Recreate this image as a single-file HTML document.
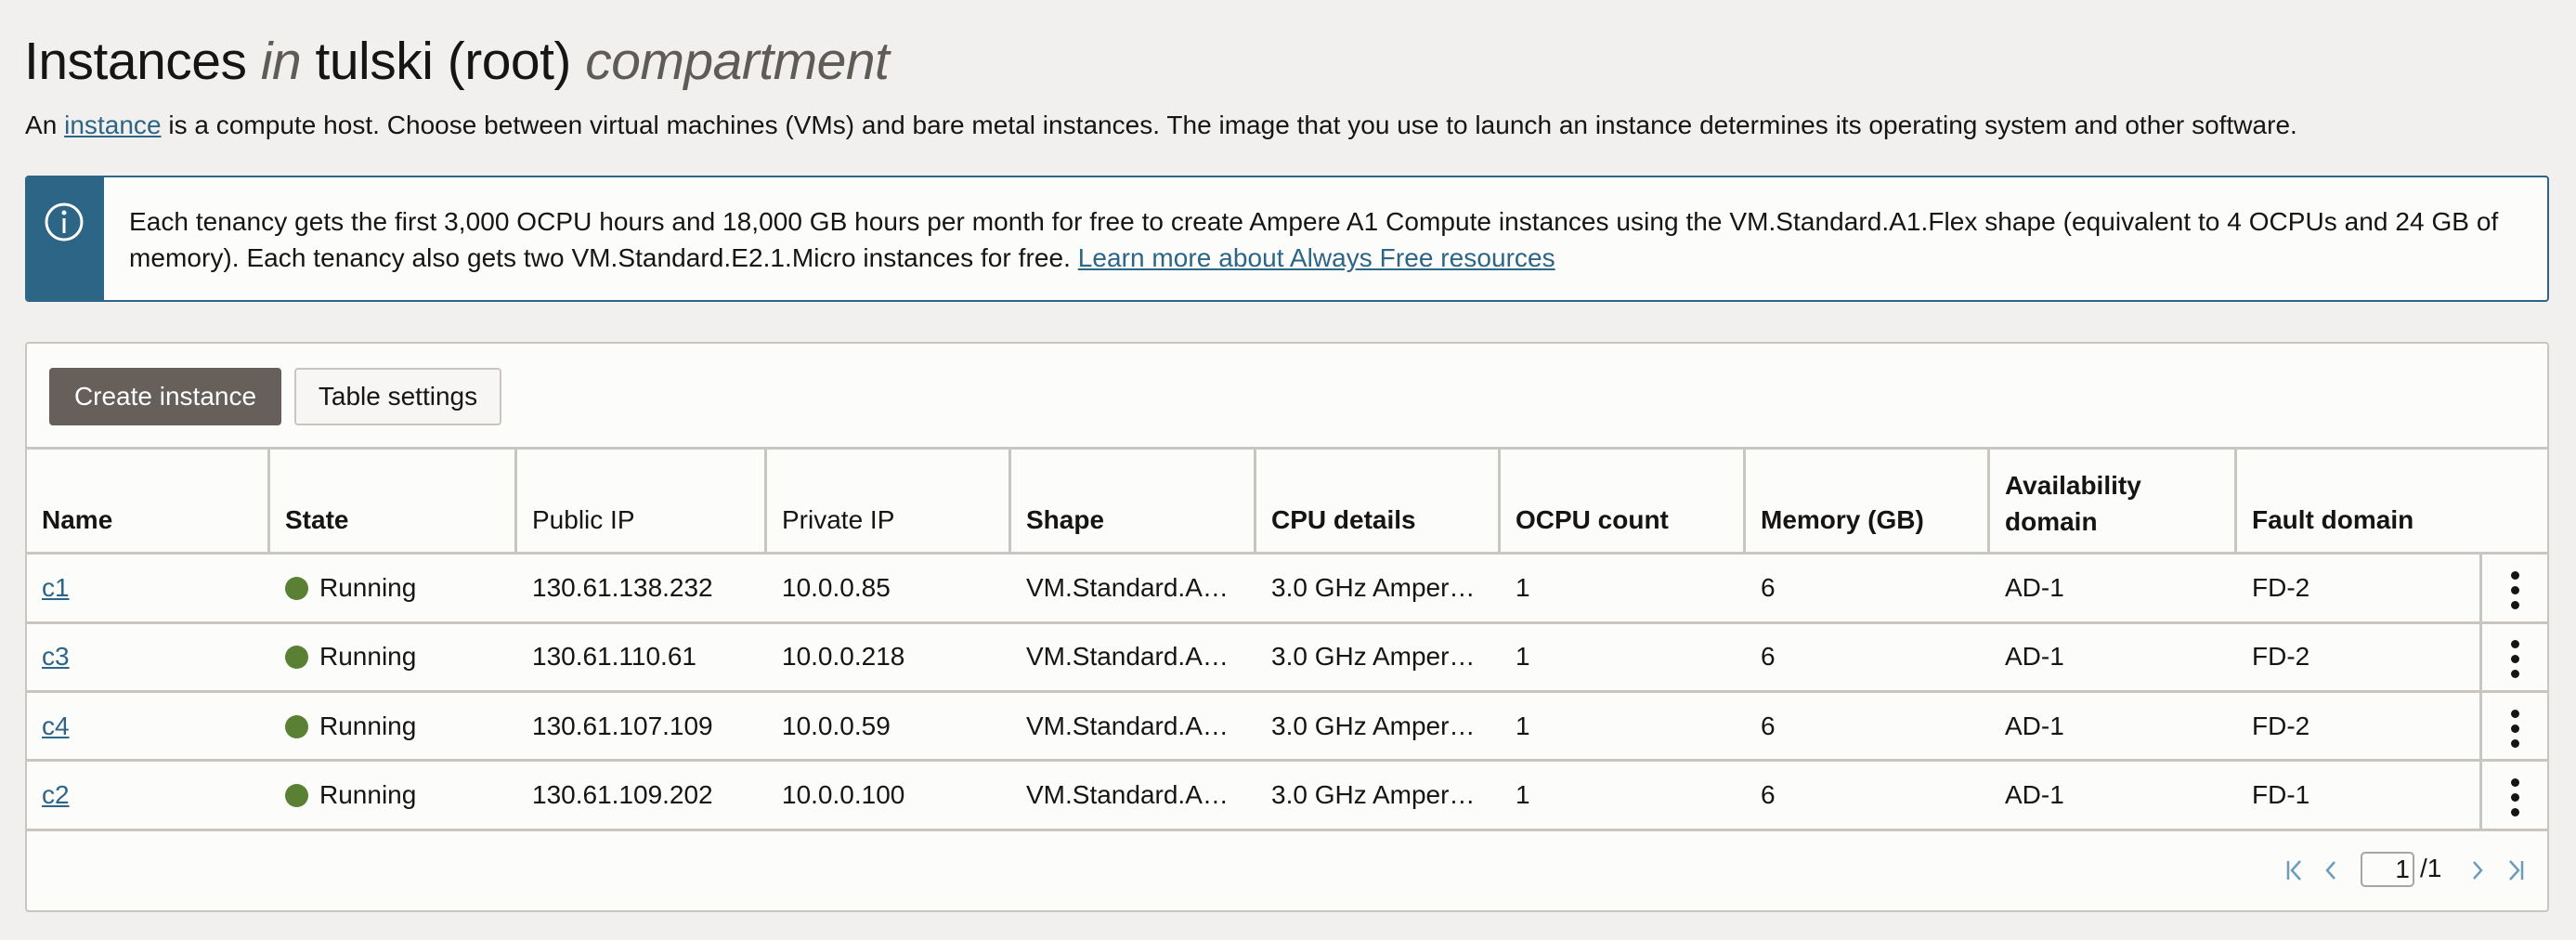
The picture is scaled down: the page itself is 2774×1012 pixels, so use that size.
<!DOCTYPE html>
<html><head><meta charset="utf-8"><style>
*{box-sizing:border-box;margin:0;padding:0}
body{width:2774px;height:1012px;overflow:hidden;background:#f1f0ee;font-family:"Liberation Sans",sans-serif;color:#161513;position:relative}
.abs{position:absolute;white-space:nowrap}
a{color:#2c6585;text-decoration:underline}
h1{position:absolute;left:26px;top:33px;font-size:57px;font-weight:400;letter-spacing:-0.5px}
h1 i{color:#5f5b57}
.sub{left:27px;top:119px;font-size:28px;letter-spacing:0.02px}
.info{position:absolute;left:27px;top:189px;width:2718px;height:136px;background:#fcfcfb;border:2px solid #2c6585;border-radius:4px;overflow:hidden}
.strip{position:absolute;left:0;top:0;width:83px;height:100%;background:#2c6585}
.itext{position:absolute;left:110px;top:28px;font-size:28px;line-height:39px;width:2590px;letter-spacing:0.05px}
.panel{position:absolute;left:27px;top:368px;width:2718px;height:614px;background:#fcfcfb;border:2px solid #c9c6c1;border-radius:4px}
.btn{position:absolute;top:26px;height:62px;font-size:28px;line-height:58px;text-align:center;border-radius:4px}
.b1{left:24px;width:250px;background:#665f5a;color:#fff;border:2px solid #665f5a}
.b2{left:288px;width:223px;background:#f7f6f5;border:2px solid #c9c6c1}
.hl{position:absolute;left:0;width:100%;height:3px;background:#c9c6c1}
.vl{position:absolute;width:3px;background:#c9c6c1}
.c{position:absolute;font-size:28px;white-space:nowrap}
.h{font-weight:700}
.dot{display:inline-block;width:25px;height:25px;border-radius:50%;background:#5a8033;vertical-align:-4px;margin-right:12px}
.keb{position:absolute;width:9px;height:9px;border-radius:50%;background:#161513}
</style></head><body>
<h1>Instances <i>in</i> tulski (root) <i>compartment</i></h1>
<div class="abs sub">An <a>instance</a> is a compute host. Choose between virtual machines (VMs) and bare metal instances. The image that you use to launch an instance determines its operating system and other software.</div>
<div class="info"><div class="strip">
<svg width="83" height="132" viewBox="0 0 83 132"><circle cx="40" cy="48" r="19" fill="none" stroke="#fff" stroke-width="3"/><circle cx="40" cy="38" r="2.5" fill="#fff"/><rect x="38.5" y="44" width="3" height="16" fill="#fff"/></svg></div>
<div class="itext">Each tenancy gets the first 3,000 OCPU hours and 18,000 GB hours per month for free to create Ampere A1 Compute instances using the VM.Standard.A1.Flex shape (equivalent to 4 OCPUs and 24 GB of memory). Each tenancy also gets two VM.Standard.E2.1.Micro instances for free. <a>Learn more about Always Free resources</a></div></div>
<div class="panel">
<div class="btn b1">Create instance</div><div class="btn b2">Table settings</div>
<div class="hl" style="top:111px"></div>
<div class="hl" style="top:224px"></div>
<div class="hl" style="top:299px"></div>
<div class="hl" style="top:373px"></div>
<div class="hl" style="top:447px"></div>
<div class="hl" style="top:522px"></div>
<div class="vl" style="left:259px;top:112px;height:113px"></div>
<div class="vl" style="left:525px;top:112px;height:113px"></div>
<div class="vl" style="left:794px;top:112px;height:113px"></div>
<div class="vl" style="left:1057px;top:112px;height:113px"></div>
<div class="vl" style="left:1321px;top:112px;height:113px"></div>
<div class="vl" style="left:1584px;top:112px;height:113px"></div>
<div class="vl" style="left:1848px;top:112px;height:113px"></div>
<div class="vl" style="left:2111px;top:112px;height:113px"></div>
<div class="vl" style="left:2377px;top:112px;height:113px"></div>
<div class="vl" style="left:2641px;top:225px;height:298px"></div>
<div class="c h" style="left:16px;top:174px">Name</div>
<div class="c h" style="left:278px;top:174px">State</div>
<div class="c" style="left:544px;top:174px">Public IP</div>
<div class="c" style="left:813px;top:174px">Private IP</div>
<div class="c h" style="left:1076px;top:174px">Shape</div>
<div class="c h" style="left:1340px;top:174px">CPU details</div>
<div class="c h" style="left:1603px;top:174px">OCPU count</div>
<div class="c h" style="left:1867px;top:174px">Memory (GB)</div>
<div class="c h" style="left:2130px;top:133px;line-height:39px">Availability<br>domain</div>
<div class="c h" style="left:2396px;top:174px">Fault domain</div>
</div>
<div id="rows"></div>
<script>
var d=[["c1","130.61.138.232","10.0.0.85","FD-2"],["c3","130.61.110.61","10.0.0.218","FD-2"],["c4","130.61.107.109","10.0.0.59","FD-2"],["c2","130.61.109.202","10.0.0.100","FD-1"]];
var p=document.querySelector('.panel'),h='';
d.forEach(function(r,i){var t=247+i*74.3;
h+='<div class="c" style="left:16px;top:'+t+'px"><a>'+r[0]+'</a></div>';
h+='<div class="c" style="left:278px;top:'+t+'px"><span class="dot"></span>Running</div>';
h+='<div class="c" style="left:544px;top:'+t+'px">'+r[1]+'</div>';
h+='<div class="c" style="left:813px;top:'+t+'px">'+r[2]+'</div>';
h+='<div class="c" style="left:1076px;top:'+t+'px">VM.Standard.A…</div>';
h+='<div class="c" style="left:1340px;top:'+t+'px">3.0 GHz Amper…</div>';
h+='<div class="c" style="left:1603px;top:'+t+'px">1</div>';
h+='<div class="c" style="left:1867px;top:'+t+'px">6</div>';
h+='<div class="c" style="left:2130px;top:'+t+'px">AD-1</div>';
h+='<div class="c" style="left:2396px;top:'+t+'px">'+r[3]+'</div>';
for(var k=0;k<3;k++)h+='<div class="keb" style="left:2675px;top:'+(t-2+k*16)+'px"></div>';
});
h+='<svg style="position:absolute;left:2430px;top:553px" width="270" height="30" viewBox="0 0 270 30" fill="none" stroke="#6a9cbd" stroke-width="2.5"><path d="M5 4v20M18 4l-9 10 9 10"/><path d="M55 5l-8 9 8 9"/><path d="M205 5l8 9-8 9"/><path d="M244 4l9 10-9 10M257 4v20"/></svg>';
h+='<div style="position:absolute;left:2513px;top:547px;width:58px;height:38px;border:2px solid #a9a6a1;border-radius:5px;font-size:28px;text-align:right;padding-right:3px;line-height:34px">1</div>';
h+='<div class="c" style="left:2577px;top:549px">/1</div>';
p.insertAdjacentHTML('beforeend',h);
</script>
</body></html>
